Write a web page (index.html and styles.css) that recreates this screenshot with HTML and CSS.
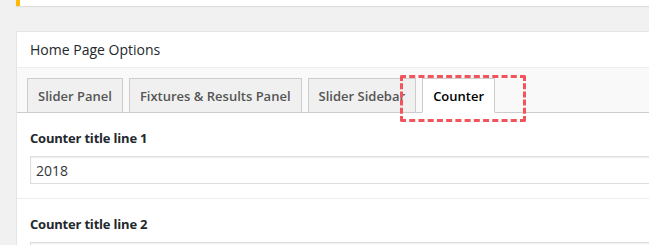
FILE: index.html
```html
<!DOCTYPE html>
<html>
<head>
    <meta charset="UTF-8">
    <title>Home Page Options</title>
    <link rel="stylesheet" href="styles.css">
</head>
<body>
    <div class="notice"></div>

    <div class="panel">
        <h2 class="panel-title">Home Page Options</h2>

        <!-- 选项卡 -->
        <div class="tabs">
            <a class="tab" href="#">Slider Panel</a>
            <a class="tab" href="#">Fixtures &amp; Results Panel</a>
            <a class="tab" href="#">Slider Sidebar</a>
            <a class="tab active" href="#">Counter</a>
            <span class="highlight"></span>
        </div>

        <div class="field">
            <label>Counter title line 1</label>
            <input type="text" value="2018">
        </div>

        <div class="field">
            <label>Counter title line 2</label>
            <input type="text" value="">
        </div>
    </div>
</body>
</html>
```

FILE: styles.css
```css
* {
    box-sizing: border-box;
    margin: 0;
    padding: 0;
}

html, body {
    height: 245px;
    overflow: hidden;
}

body {
    background: #f1f1f1;
    font-family: "Open Sans", "Noto Sans", sans-serif;
    color: #23282d;
    padding-left: 16px;
    margin-right: -20px;
}

.notice {
    height: 6px;
    background: white;
    border-left: 4px solid #ffb900;
    box-shadow: 0 1px 1px rgba(0,0,0,0.08);
}

.panel {
    margin-top: 25px;
    background: white;
    border: 1px solid #e5e5e5;
    border-right: none;
}

.panel-title {
    font-size: 14px;
    font-weight: 400;
    height: 36px;
    line-height: 36px;
    padding-left: 13px;
    border-bottom: 1px solid #eee;
}

/* 选项卡 */
.tabs {
    position: relative;
    display: flex;
    gap: 6px;
    padding: 10px 0 0 10px;
    background: #f9f9f9;
    border-bottom: 1px solid #ccc;
}

.tab {
    display: block;
    height: 35px;
    line-height: 34px;
    padding: 0 10px;
    margin-bottom: -1px;
    font-size: 13px;
    font-weight: 600;
    color: #555;
    text-decoration: none;
    background: #f0f0f0;
    border: 1px solid #ccc;
}

.tab.active {
    background: white;
    color: #000;
    border-bottom-color: white;
}

.highlight {
    position: absolute;
    left: 383px;
    top: 7px;
    width: 126px;
    height: 47px;
    border: 3px dashed #f2545b;
    border-radius: 2px;
}

.field {
    padding: 16px 0 14px 13px;
    border-bottom: 1px solid #eee;
}

.field label {
    display: block;
    font-size: 13px;
    font-weight: 700;
    line-height: 18px;
    letter-spacing: -0.2px;
    margin-bottom: 9px;
}

.field input {
    display: block;
    width: 100%;
    height: 28px;
    padding: 0 5px;
    border: 1px solid #ddd;
    font-family: inherit;
    font-size: 14px;
    color: #32373c;
    box-shadow: inset 0 1px 2px rgba(0,0,0,0.07);
}
```
